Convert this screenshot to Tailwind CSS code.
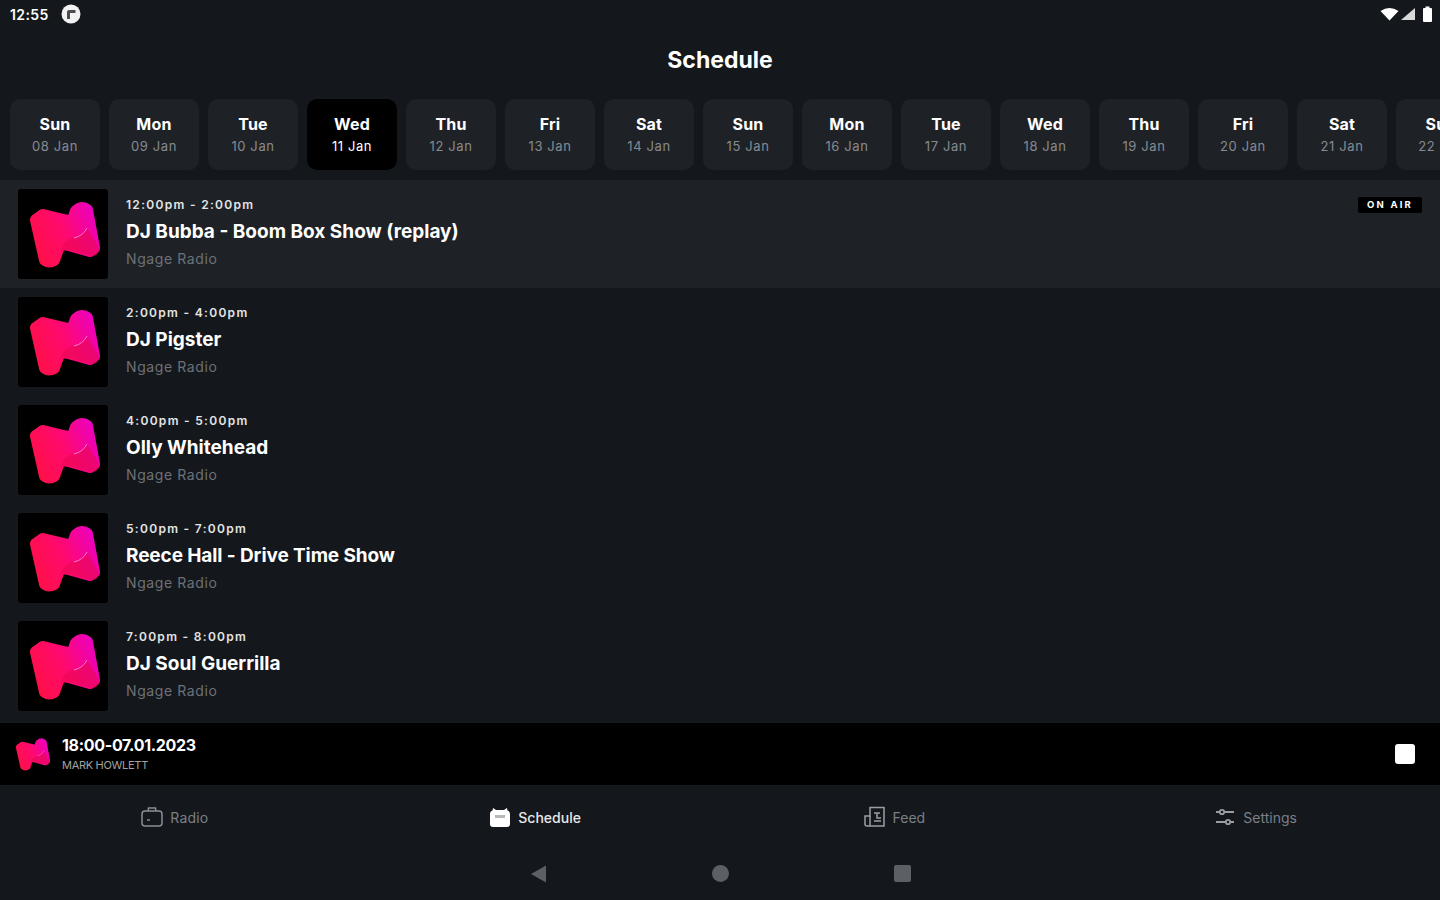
<!DOCTYPE html>
<html lang="en">
<head>
<meta charset="utf-8">
<title>Schedule</title>
<script src="https://cdn.jsdelivr.net/npm/@tailwindcss/browser@4"></script>
</head>
<body class="m-0 bg-[#14181d]">
<svg width="0" height="0" class="absolute">
  <defs>
    <linearGradient id="lg" gradientUnits="userSpaceOnUse" x1="14" y1="60" x2="80" y2="30">
      <stop offset="0" stop-color="#ff1046"/>
      <stop offset="0.5" stop-color="#ff0a6e"/>
      <stop offset="1" stop-color="#ec00c0"/>
    </linearGradient>
    <symbol id="logo" viewBox="0 0 90 90">
      <path d="M18 31 L25 26 L54 33 L58 22 Q64 17 69 21 L76 59 L72 62 L47 55 L41 57 L36 71 Q31 74 27 71 Z" fill="url(#lg)" stroke="url(#lg)" stroke-width="12" stroke-linejoin="round"/>
      <path d="M42 62 Q45 51 56 49 Q65 47 69 39 L81 59 Q81 68 73 67 L48 60 Z" fill="#e8084f" fill-opacity="0.55"/>
      <path d="M56 49 Q65 47 69 39" fill="none" stroke="#ff7ad0" stroke-width="1"/>
    </symbol>
  </defs>
</svg>
<div class="w-[1440px] h-[900px] overflow-hidden flex flex-col bg-[#14181d] text-white font-['Inter','Liberation_Sans',sans-serif]">

  <!-- status bar -->
  <div class="h-[28px] flex items-center justify-between pl-[10px] pr-[7px] shrink-0">
    <div class="flex items-center gap-[12px]">
      <span class="text-[14px] font-semibold tracking-[0.4px]">12:55</span>
      <svg class="w-[20px] h-[20px]" viewBox="0 0 20 20"><circle cx="10" cy="10" r="9.500" fill="#f2f2f2"/><path d="M14.500 6 H8 Q6 6 6 8 V15 H9 V9 H14.500 Z" fill="#4a4d52"/></svg>
    </div>
    <div class="flex items-center">
      <svg class="w-[19px] h-[14px]" viewBox="0 0 19 14"><path d="M0.500 4 Q9.500 -2 18.500 4 L9.500 13.500 Z" fill="#fff"/></svg>
      <svg class="w-[15px] h-[14px] ml-[1px]" viewBox="0 0 15 14"><path d="M15 1 V13 H1 Z" fill="#d9d9d9"/></svg>
      <svg class="w-[11px] h-[16px] ml-[7px]" viewBox="0 0 11 16"><path d="M1 3 Q1 2 2 2 H3.500 V0.500 H7.500 V2 H9 Q10 2 10 3 V15 Q10 16 9 16 H2 Q1 16 1 15 Z" fill="#fff"/></svg>
    </div>
  </div>

  <!-- title -->
  <div class="h-[71px] shrink-0 pt-[16px] flex justify-center">
    <h1 class="text-[23px] leading-[32px] font-bold">Schedule</h1>
  </div>

  <!-- days -->
  <div class="h-[71px] shrink-0 flex gap-[9px] pl-[10px] overflow-hidden">
    <div class="w-[90px] shrink-0 rounded-[10px] bg-[#1e2227] flex flex-col items-center pt-[15px]"><span class="text-[16px] leading-[20px] font-bold tracking-[0.2px]">Sun</span><span class="text-[13px] leading-[18px] mt-[3px] text-[#868a90] tracking-[0.6px]">08 Jan</span></div>
    <div class="w-[90px] shrink-0 rounded-[10px] bg-[#1e2227] flex flex-col items-center pt-[15px]"><span class="text-[16px] leading-[20px] font-bold tracking-[0.2px]">Mon</span><span class="text-[13px] leading-[18px] mt-[3px] text-[#868a90] tracking-[0.6px]">09 Jan</span></div>
    <div class="w-[90px] shrink-0 rounded-[10px] bg-[#1e2227] flex flex-col items-center pt-[15px]"><span class="text-[16px] leading-[20px] font-bold tracking-[0.2px]">Tue</span><span class="text-[13px] leading-[18px] mt-[3px] text-[#868a90] tracking-[0.6px]">10 Jan</span></div>
    <div class="w-[90px] shrink-0 rounded-[10px] bg-black flex flex-col items-center pt-[15px]"><span class="text-[16px] leading-[20px] font-bold tracking-[0.2px]">Wed</span><span class="text-[13px] leading-[18px] mt-[3px] text-white tracking-[0.6px]">11 Jan</span></div>
    <div class="w-[90px] shrink-0 rounded-[10px] bg-[#1e2227] flex flex-col items-center pt-[15px]"><span class="text-[16px] leading-[20px] font-bold tracking-[0.2px]">Thu</span><span class="text-[13px] leading-[18px] mt-[3px] text-[#868a90] tracking-[0.6px]">12 Jan</span></div>
    <div class="w-[90px] shrink-0 rounded-[10px] bg-[#1e2227] flex flex-col items-center pt-[15px]"><span class="text-[16px] leading-[20px] font-bold tracking-[0.2px]">Fri</span><span class="text-[13px] leading-[18px] mt-[3px] text-[#868a90] tracking-[0.6px]">13 Jan</span></div>
    <div class="w-[90px] shrink-0 rounded-[10px] bg-[#1e2227] flex flex-col items-center pt-[15px]"><span class="text-[16px] leading-[20px] font-bold tracking-[0.2px]">Sat</span><span class="text-[13px] leading-[18px] mt-[3px] text-[#868a90] tracking-[0.6px]">14 Jan</span></div>
    <div class="w-[90px] shrink-0 rounded-[10px] bg-[#1e2227] flex flex-col items-center pt-[15px]"><span class="text-[16px] leading-[20px] font-bold tracking-[0.2px]">Sun</span><span class="text-[13px] leading-[18px] mt-[3px] text-[#868a90] tracking-[0.6px]">15 Jan</span></div>
    <div class="w-[90px] shrink-0 rounded-[10px] bg-[#1e2227] flex flex-col items-center pt-[15px]"><span class="text-[16px] leading-[20px] font-bold tracking-[0.2px]">Mon</span><span class="text-[13px] leading-[18px] mt-[3px] text-[#868a90] tracking-[0.6px]">16 Jan</span></div>
    <div class="w-[90px] shrink-0 rounded-[10px] bg-[#1e2227] flex flex-col items-center pt-[15px]"><span class="text-[16px] leading-[20px] font-bold tracking-[0.2px]">Tue</span><span class="text-[13px] leading-[18px] mt-[3px] text-[#868a90] tracking-[0.6px]">17 Jan</span></div>
    <div class="w-[90px] shrink-0 rounded-[10px] bg-[#1e2227] flex flex-col items-center pt-[15px]"><span class="text-[16px] leading-[20px] font-bold tracking-[0.2px]">Wed</span><span class="text-[13px] leading-[18px] mt-[3px] text-[#868a90] tracking-[0.6px]">18 Jan</span></div>
    <div class="w-[90px] shrink-0 rounded-[10px] bg-[#1e2227] flex flex-col items-center pt-[15px]"><span class="text-[16px] leading-[20px] font-bold tracking-[0.2px]">Thu</span><span class="text-[13px] leading-[18px] mt-[3px] text-[#868a90] tracking-[0.6px]">19 Jan</span></div>
    <div class="w-[90px] shrink-0 rounded-[10px] bg-[#1e2227] flex flex-col items-center pt-[15px]"><span class="text-[16px] leading-[20px] font-bold tracking-[0.2px]">Fri</span><span class="text-[13px] leading-[18px] mt-[3px] text-[#868a90] tracking-[0.6px]">20 Jan</span></div>
    <div class="w-[90px] shrink-0 rounded-[10px] bg-[#1e2227] flex flex-col items-center pt-[15px]"><span class="text-[16px] leading-[20px] font-bold tracking-[0.2px]">Sat</span><span class="text-[13px] leading-[18px] mt-[3px] text-[#868a90] tracking-[0.6px]">21 Jan</span></div>
    <div class="w-[90px] shrink-0 rounded-[10px] bg-[#1e2227] flex flex-col items-center pt-[15px]"><span class="text-[16px] leading-[20px] font-bold tracking-[0.2px]">Sun</span><span class="text-[13px] leading-[18px] mt-[3px] text-[#868a90] tracking-[0.6px]">22 Jan</span></div>
  </div>

  <!-- list -->
  <div class="mt-[10px] h-[540px] shrink-0 flex flex-col">
    <div class="h-[108px] shrink-0 bg-[#1e2227] flex items-start gap-[18px] pl-[18px] pr-[18px] pt-[9px]">
      <div class="w-[90px] h-[90px] bg-black rounded-[3px] shrink-0"><svg class="w-full h-full"><use href="#logo"/></svg></div>
      <div class="flex flex-col flex-1 pt-[8px]"><span class="text-[12px] leading-[16px] font-semibold text-[#e4e4e4] tracking-[1.3px]">12:00pm - 2:00pm</span><span class="text-[19px] leading-[28px] font-bold mt-[5px]">DJ Bubba - Boom Box Show (replay)</span><span class="text-[14px] leading-[18px] text-[#6d7177] mt-[4px] tracking-[0.6px]">Ngage Radio</span></div>
      <span class="w-[64px] h-[16px] mt-[8px] bg-black rounded-[2px] flex items-center justify-center text-[9.5px] font-bold tracking-[2.2px] shrink-0">ON AIR</span>
    </div>
    <div class="h-[108px] shrink-0 flex items-start gap-[18px] pl-[18px] pt-[9px]">
      <div class="w-[90px] h-[90px] bg-black rounded-[3px] shrink-0"><svg class="w-full h-full"><use href="#logo"/></svg></div>
      <div class="flex flex-col flex-1 pt-[8px]"><span class="text-[12px] leading-[16px] font-semibold text-[#e4e4e4] tracking-[1.3px]">2:00pm - 4:00pm</span><span class="text-[19px] leading-[28px] font-bold mt-[5px]">DJ Pigster</span><span class="text-[14px] leading-[18px] text-[#6d7177] mt-[4px] tracking-[0.6px]">Ngage Radio</span></div>
    </div>
    <div class="h-[108px] shrink-0 flex items-start gap-[18px] pl-[18px] pt-[9px]">
      <div class="w-[90px] h-[90px] bg-black rounded-[3px] shrink-0"><svg class="w-full h-full"><use href="#logo"/></svg></div>
      <div class="flex flex-col flex-1 pt-[8px]"><span class="text-[12px] leading-[16px] font-semibold text-[#e4e4e4] tracking-[1.3px]">4:00pm - 5:00pm</span><span class="text-[19px] leading-[28px] font-bold mt-[5px]">Olly Whitehead</span><span class="text-[14px] leading-[18px] text-[#6d7177] mt-[4px] tracking-[0.6px]">Ngage Radio</span></div>
    </div>
    <div class="h-[108px] shrink-0 flex items-start gap-[18px] pl-[18px] pt-[9px]">
      <div class="w-[90px] h-[90px] bg-black rounded-[3px] shrink-0"><svg class="w-full h-full"><use href="#logo"/></svg></div>
      <div class="flex flex-col flex-1 pt-[8px]"><span class="text-[12px] leading-[16px] font-semibold text-[#e4e4e4] tracking-[1.3px]">5:00pm - 7:00pm</span><span class="text-[19px] leading-[28px] font-bold mt-[5px] tracking-[-0.1px]">Reece Hall - Drive Time Show</span><span class="text-[14px] leading-[18px] text-[#6d7177] mt-[4px] tracking-[0.6px]">Ngage Radio</span></div>
    </div>
    <div class="h-[108px] shrink-0 flex items-start gap-[18px] pl-[18px] pt-[9px]">
      <div class="w-[90px] h-[90px] bg-black rounded-[3px] shrink-0"><svg class="w-full h-full"><use href="#logo"/></svg></div>
      <div class="flex flex-col flex-1 pt-[8px]"><span class="text-[12px] leading-[16px] font-semibold text-[#e4e4e4] tracking-[1.3px]">7:00pm - 8:00pm</span><span class="text-[19px] leading-[28px] font-bold mt-[5px]">DJ Soul Guerrilla</span><span class="text-[14px] leading-[18px] text-[#6d7177] mt-[4px] tracking-[0.6px]">Ngage Radio</span></div>
    </div>
  </div>

  <!-- player -->
  <div class="mt-[3px] h-[62px] shrink-0 bg-black flex items-center pl-[10px] pr-[25px]">
    <svg class="w-[44px] h-[44px] shrink-0"><use href="#logo"/></svg>
    <div class="flex flex-col ml-[8px] flex-1 mt-[-2px]">
      <span class="text-[16px] leading-[20px] font-bold tracking-[-0.3px]">18:00-07.01.2023</span>
      <span class="text-[11px] leading-[14px] mt-[3px] text-[#a3a3a3] tracking-[-0.3px]">MARK HOWLETT</span>
    </div>
    <div class="w-[20px] h-[20px] bg-white rounded-[3px]"></div>
  </div>

  <!-- tabs -->
  <div class="h-[66px] shrink-0 grid grid-cols-4 pr-[9px] pb-[2px]">
    <div class="flex items-center justify-center gap-[7px] pr-[8px] text-[#7b7f85] text-[14px] tracking-[0.2px]">
      <svg class="w-[22px] h-[22px]" viewBox="0 0 22 22" fill="none" stroke="#8b8f95" stroke-width="1.500"><rect x="1" y="5" width="20" height="15" rx="3"/><path d="M7 5 L7.500 2 H14.500 L15 5"/><path d="M6 14 H9" /></svg>
      <span>Radio</span>
    </div>
    <div class="flex items-center justify-center gap-[8px] pr-[2px] text-[#e8e8e8] text-[14px] font-medium">
      <svg class="w-[20px] h-[22px]" viewBox="0 0 20 22" fill="#fff"><path d="M3 2 L6 4 H14 L17 2 L17.500 4.500 Q20 5 20 8 V18 Q20 21 17 21 H3 Q0 21 0 18 V8 Q0 5 2.500 4.500 Z"/><rect x="5" y="9" width="10" height="3" fill="#b8b8b8"/></svg>
      <span>Schedule</span>
    </div>
    <div class="flex items-center justify-center gap-[7px] text-[#7b7f85] text-[14px]">
      <svg class="w-[22px] h-[22px]" viewBox="0 0 22 22" fill="none" stroke="#9a9ea3" stroke-width="1.500"><path d="M6 1.500 H20 V20 H3 Q1 20 1 18 V10 H6 Z"/><path d="M6 10 V20"/><path d="M10 7 H16 M13 7 V12 H17 M10 15 H17"/></svg>
      <span>Feed</span>
    </div>
    <div class="flex items-center justify-center gap-[8px] pl-[8px] text-[#7b7f85] text-[14px]">
      <svg class="w-[20px] h-[20px]" viewBox="0 0 20 20" fill="none" stroke="#9a9ea3" stroke-width="1.800"><path d="M1 5 H19 M1 15 H19"/><circle cx="7" cy="5" r="2.200" fill="#14181d"/><circle cx="13" cy="15" r="2.200" fill="#14181d"/></svg>
      <span>Settings</span>
    </div>
  </div>

  <!-- system navigation -->
  <div class="flex-1 flex items-start justify-center gap-[165px] pt-[14px]">
    <svg class="w-[17px] h-[18px]" viewBox="0 0 17 18"><path d="M16 0.500 V17.500 L1 9 Z" fill="#5c5f63"/></svg>
    <div class="w-[17px] h-[17px] rounded-full bg-[#5c5f63]"></div>
    <div class="w-[17px] h-[17px] rounded-[2px] bg-[#5c5f63]"></div>
  </div>
</div>
</body>
</html>
